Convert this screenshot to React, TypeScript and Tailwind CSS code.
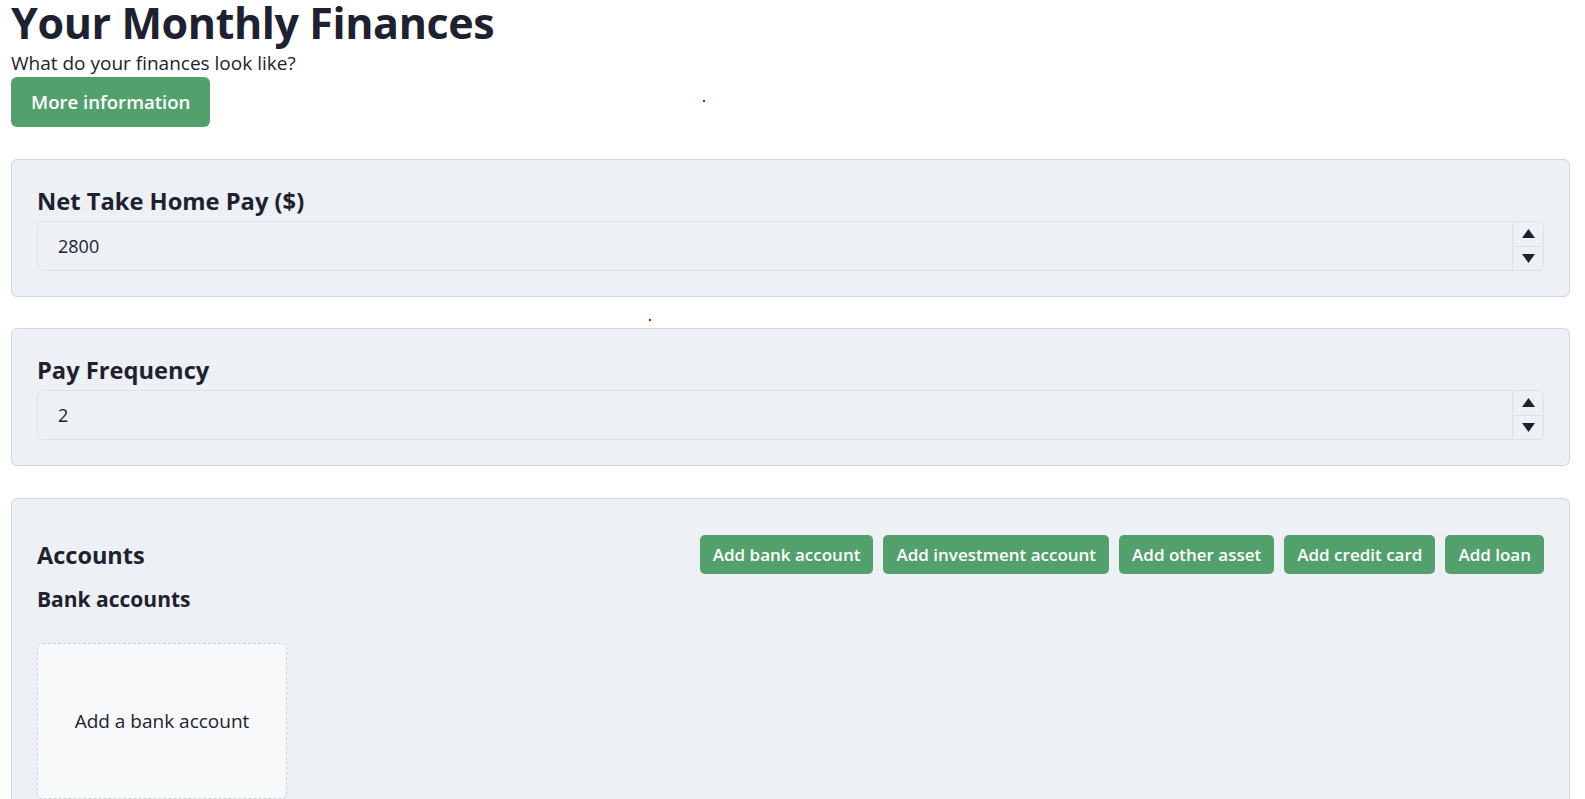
import { useState } from "react";

const font = { fontFamily: '"Open Sans", "Noto Sans", sans-serif' };

function Dot({ className }: { className: string }) {
  return <div className={`h-[2px] w-[2px] bg-[#2b2bff] ${className}`} />;
}

function NumberField({ value, onChange }: { value: number; onChange: (v: number) => void }) {
  return (
    <div className="flex h-[50px] items-stretch rounded-[6px] border border-[#dde2ea] bg-[#edf0f5]">
      <input
        type="text"
        value={value}
        onChange={(event) => onChange(Number(event.target.value) || 0)}
        className="min-w-0 flex-1 bg-transparent pl-[20px] text-[18px] text-[#1d2130] outline-none"
      />
      <div className="flex w-[31px] flex-col border-l border-[#dde2ea]">
        <button
          onClick={() => onChange(value + 1)}
          className="flex flex-1 items-center justify-center border-b border-[#dde2ea]"
        >
          <svg width="13" height="9" viewBox="0 0 13 9">
            <path d="M6.5 0 L13 9 L0 9 Z" fill="#1d2130" />
          </svg>
        </button>
        <button onClick={() => onChange(value - 1)} className="flex flex-1 items-center justify-center">
          <svg width="13" height="9" viewBox="0 0 13 9">
            <path d="M0 0 L13 0 L6.5 9 Z" fill="#1d2130" />
          </svg>
        </button>
      </div>
    </div>
  );
}

function Panel({ title, value, onChange }: { title: string; value: number; onChange: (v: number) => void }) {
  return (
    <section className="rounded-[6px] border border-[#cfd6df] bg-[#edf0f5] px-[25px] pb-[25px] pt-[24px]">
      <h2 className="mb-[3px] text-[23.7px] font-bold leading-[34px]">{title}</h2>
      <NumberField value={value} onChange={onChange} />
    </section>
  );
}

const accountButtons = [
  "Add bank account",
  "Add investment account",
  "Add other asset",
  "Add credit card",
  "Add loan",
];

function App() {
  const [pay, setPay] = useState(2800);
  const [frequency, setFrequency] = useState(2);

  return (
    <main style={font} className="min-h-screen bg-white pl-[11px] pr-[15px] text-[#1d2130]">
      <header className="pt-[2px]">
        <h1 className="text-[43px] font-bold leading-[42px] tracking-[-0.4px]">Your Monthly Finances</h1>
        <p className="mt-[6px] text-[19px] leading-[26px]">What do your finances look like?</p>
        <div className="mt-[1px] flex items-start">
          <button className="h-[50px] rounded-[6px] bg-[#52a06c] px-[20px] text-[18.6px] font-semibold text-white">
            More information
          </button>
          <Dot className="ml-[493px] mt-[23px]" />
        </div>
      </header>

      <div className="mt-[32px]">
        <Panel title="Net Take Home Pay ($)" value={pay} onChange={setPay} />
      </div>
      <div className="flex h-[31px] items-start pl-[638px] pt-[22px]">
        <Dot className="" />
      </div>
      <Panel title="Pay Frequency" value={frequency} onChange={setFrequency} />

      <section className="mt-[32px] rounded-[6px] border border-[#cfd6df] bg-[#edf0f5] px-[25px] pb-[20px] pt-[36px]">
        <div className="flex items-center justify-between">
          <h2 className="text-[23.5px] font-bold leading-[36px]">Accounts</h2>
          <div className="flex gap-[10px]">
            {accountButtons.map((label) => (
              <button
                key={label}
                className="h-[39px] rounded-[5px] bg-[#52a06c] px-[13px] text-[17px] font-semibold text-white"
              >
                {label}
              </button>
            ))}
          </div>
        </div>
        <h3 className="mt-[10px] text-[21px] font-bold leading-[30px]">Bank accounts</h3>
        <div className="mt-[29px] flex h-[156px] w-[250px] items-center justify-center rounded-[6px] border border-dashed border-[#c9d2dc] bg-[#f8f9fb] text-[19px]">
          Add a bank account
        </div>
      </section>
    </main>
  );
}

export default App;
